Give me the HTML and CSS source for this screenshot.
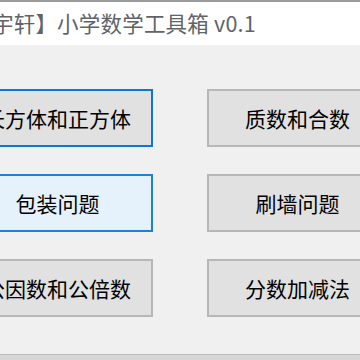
FILE: index.html
```html
<!DOCTYPE html>
<html lang="zh-CN">
<head>
  <meta charset="UTF-8">
  <meta name="viewport" content="width=device-width, initial-scale=1.0">
  <title>小学数学工具箱</title>
  <link rel="stylesheet" href="styles.css">
</head>
<body>
  <div class="window">
    <!-- Title Bar -->
    <header class="titlebar">
      <span class="title">宇轩】小学数学工具箱 v0.1</span>
    </header>

    <!-- Tool Buttons -->
    <main class="panel">
      <div class="tool-grid">
        <button class="tool-btn focused">长方体和正方体</button>
        <button class="tool-btn">质数和合数</button>
        <button class="tool-btn hovered">包装问题</button>
        <button class="tool-btn">刷墙问题</button>
        <button class="tool-btn">公因数和公倍数</button>
        <button class="tool-btn">分数加减法</button>
      </div>
    </main>

    <div class="statusbar"></div>
  </div>
</body>
</html>
```

FILE: styles.css
```css
/* General Styles */
html, body {
  margin: 0;
  padding: 0;
  width: 360px;
  height: 360px;
  overflow: hidden;
}

body {
  font-family: "Noto Sans CJK SC", "Noto Sans", sans-serif;
  background: #f0f0f0;
  color: #000;
}

.window {
  display: flex;
  flex-direction: column;
  height: 360px;
}

/* Title Bar */
.titlebar {
  height: 43px;
  background: #fff;
  border-top: 2px solid #9c9c9c;
  display: flex;
  align-items: center;
  white-space: nowrap;
  overflow: hidden;
}

.title {
  margin-left: -8px;
  margin-top: -2px;
  font-size: 21.5px;
  letter-spacing: 0.2px;
  color: #606468;
}

/* Panel */
.panel {
  flex: 1;
  padding-top: 44px;
  overflow: hidden;
}

.tool-grid {
  display: grid;
  grid-template-columns: 186px 186px;
  grid-auto-rows: 58px;
  column-gap: 54px;
  row-gap: 27px;
  margin-left: -33px;
}

.tool-btn {
  font-family: inherit;
  font-size: 21px;
  color: #000;
  background: #e1e1e1;
  border: 2px solid #b7b7b7;
  border-radius: 0;
  padding: 0 5px 0 0;
  white-space: nowrap;
  overflow: hidden;
}

.tool-btn.focused {
  border-color: #0a78d7;
}

.tool-btn.hovered {
  background: #e5f1fb;
  border-color: #1a82da;
}

/* Status Bar */
.statusbar {
  height: 5px;
  border-top: 1px solid #bdbdbd;
  background: #d6d6d6;
}
```
